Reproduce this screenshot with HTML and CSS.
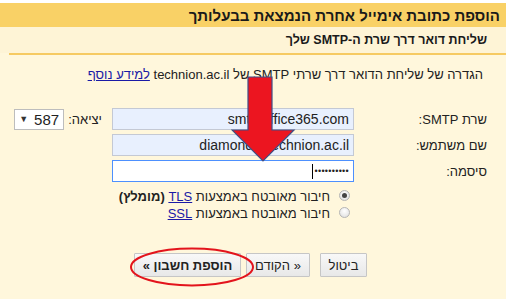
FILE: index.html
```html
<!DOCTYPE html>
<html lang="he" dir="rtl">
<head>
<meta charset="utf-8">
<link rel="stylesheet" href="styles.css">
</head>
<body>
<div class="page">
  <div class="title-bar"><h1 class="title">הוספת כתובת אימייל אחרת הנמצאת בבעלותך</h1></div>
  <div class="sub-bar"><h2 class="subtitle">שליחת דואר דרך שרת ה-SMTP שלך</h2></div>
  <div class="rule"></div>
  <p class="desc">הגדרה של שליחת הדואר דרך שרתי SMTP של technion.ac.il <a href="#" class="link">למידע נוסף</a></p>

  <div class="form">
    <div class="label">שרת SMTP:</div>
    <div class="field autofill">smtp.office365.com</div>
    <div class="port">
      <span class="port-label">יציאה:</span>
      <span class="select"><span class="select-arrow">▼</span><span class="select-val">587</span></span>
    </div>

    <div class="label">שם משתמש:</div>
    <div class="field autofill">diamond@technion.ac.il</div>
    <div></div>

    <div class="label">סיסמה:</div>
    <div class="field focused"><span class="caret"></span><span class="dots">••••••••••</span></div>
    <div></div>
  </div>

  <div class="radios">
    <label class="radio-row"><span class="radio checked"></span><span>חיבור מאובטח באמצעות <a href="#" class="link">TLS</a> <b>(מומלץ)</b></span></label>
    <label class="radio-row"><span class="radio"></span><span>חיבור מאובטח באמצעות <a href="#" class="link">SSL</a></span></label>
  </div>

  <div class="buttons">
    <button class="btn cancel">ביטול</button>
    <button class="btn back">« הקודם</button>
    <button class="btn primary">הוספת חשבון »</button>
  </div>

  <svg class="ellipse" width="130" height="42" viewBox="0 0 130 42"><ellipse cx="64" cy="20" rx="61" ry="18.5" fill="none" stroke="#e3141c" stroke-width="2"/></svg>
  <svg class="arrow" width="66" height="88" viewBox="0 0 66 88"><polygon points="17,1 41,1 41,54 63,54 32,85 1,54 17,54" fill="#ec1520" stroke="#3f4f86" stroke-width="1.2" stroke-linejoin="miter"/></svg>
</div>
</body>
</html>
```

FILE: styles.css
```css
html, body {
  margin: 0;
  padding: 0;
  background: #ffffff;
}
body {
  font-family: "Liberation Sans", Arial, sans-serif;
  color: #222;
}
.page {
  position: relative;
  margin-top: 3px;
  height: 296px;
  background: #fff7dc;
}
.title-bar {
  background: #f9d166;
  height: 24px;
  display: flex;
  align-items: center;
  padding-right: 6px;
}
.title {
  margin: 0;
  font-size: 15px;
  font-weight: bold;
  color: #1a1a1a;
}
.sub-bar {
  background: #fef4d6;
  height: 26px;
  display: flex;
  align-items: center;
  padding-right: 19px;
}
.subtitle {
  margin: 0;
  font-size: 12.5px;
  font-weight: bold;
  color: #1a1a1a;
}
.rule {
  height: 2px;
  background: #f6ca62;
  margin-left: 9px;
}
.desc {
  margin: 12px 23px 0 0;
  font-size: 13px;
  line-height: 16px;
  color: #222;
}
.link {
  color: #1a1aa6;
  text-decoration: underline;
}
.form {
  display: grid;
  grid-template-columns: 123px 242px auto;
  column-gap: 10px;
  row-gap: 4px;
  margin: 25px 19px 0 0;
  align-items: center;
}
.label {
  font-size: 13px;
  color: #222;
}
.field {
  height: 20px;
  border: 1px solid #b9b9b9;
  background: #fff;
  direction: ltr;
  text-align: right;
  font-size: 14px;
  line-height: 20px;
  padding: 0 4px;
  color: #222;
  box-sizing: content-box;
  width: 232px;
  white-space: nowrap;
  overflow: hidden;
}
.field.autofill {
  background: #e8f0fe;
  border-color: #c4c9d4;
}
.field.focused {
  border-color: #4d90fe;
  display: flex;
  align-items: center;
  justify-content: flex-end;
}
.caret {
  width: 1px;
  height: 15px;
  background: #000;
  margin-right: 1px;
}
.dots {
  font-size: 9px;
  letter-spacing: 0.3px;
  color: #222;
}
.port {
  display: flex;
  align-items: center;
  gap: 4px;
}
.port-label {
  font-size: 13px;
  color: #222;
}
.select {
  display: flex;
  align-items: center;
  justify-content: space-between;
  direction: ltr;
  border: 1px solid #bdbdbd;
  background: #fff;
  padding: 0 4px;
  box-sizing: border-box;
  width: 50px;
  height: 21px;
}
.select-arrow {
  font-size: 9px;
  color: #333;
}
.select-val {
  font-size: 15px;
  color: #222;
}
.radios {
  margin: 8px 156px 0 0;
  display: flex;
  flex-direction: column;
  gap: 3px;
}
.radio-row {
  display: flex;
  align-items: center;
  gap: 9px;
  height: 14px;
  font-size: 13px;
  line-height: 14px;
  color: #222;
}
.radio {
  width: 11px;
  height: 11px;
  border-radius: 50%;
  border: 1px solid #b5b5b5;
  background: radial-gradient(circle at 50% 35%, #ffffff, #dcdcdc);
  box-sizing: border-box;
  position: relative;
  margin-top: -4px;
}
.radio.checked::after {
  content: "";
  position: absolute;
  width: 5px;
  height: 5px;
  border-radius: 50%;
  background: #444;
  top: 2px;
  left: 2px;
}
.buttons {
  display: flex;
  margin: 32px 139px 0 0;
}
.btn {
  font-family: "Liberation Sans", Arial, sans-serif;
  font-size: 13px;
  height: 24px;
  padding: 0 10px;
  border: 1px solid #c6c6c6;
  background: linear-gradient(#f8f8f8, #e8e8e8);
  color: #222;
  border-radius: 1px;
}
.btn.cancel {
  width: 47px;
  padding: 0;
}
.btn.back {
  width: 64px;
  padding: 0;
  margin-right: 10px;
}
.btn.primary {
  font-weight: bold;
  width: 107px;
  padding: 0;
  margin-right: 5px;
}
.ellipse {
  position: absolute;
  left: 128px;
  top: 244px;
}
.arrow {
  position: absolute;
  left: 231px;
  top: 73px;
}
```
